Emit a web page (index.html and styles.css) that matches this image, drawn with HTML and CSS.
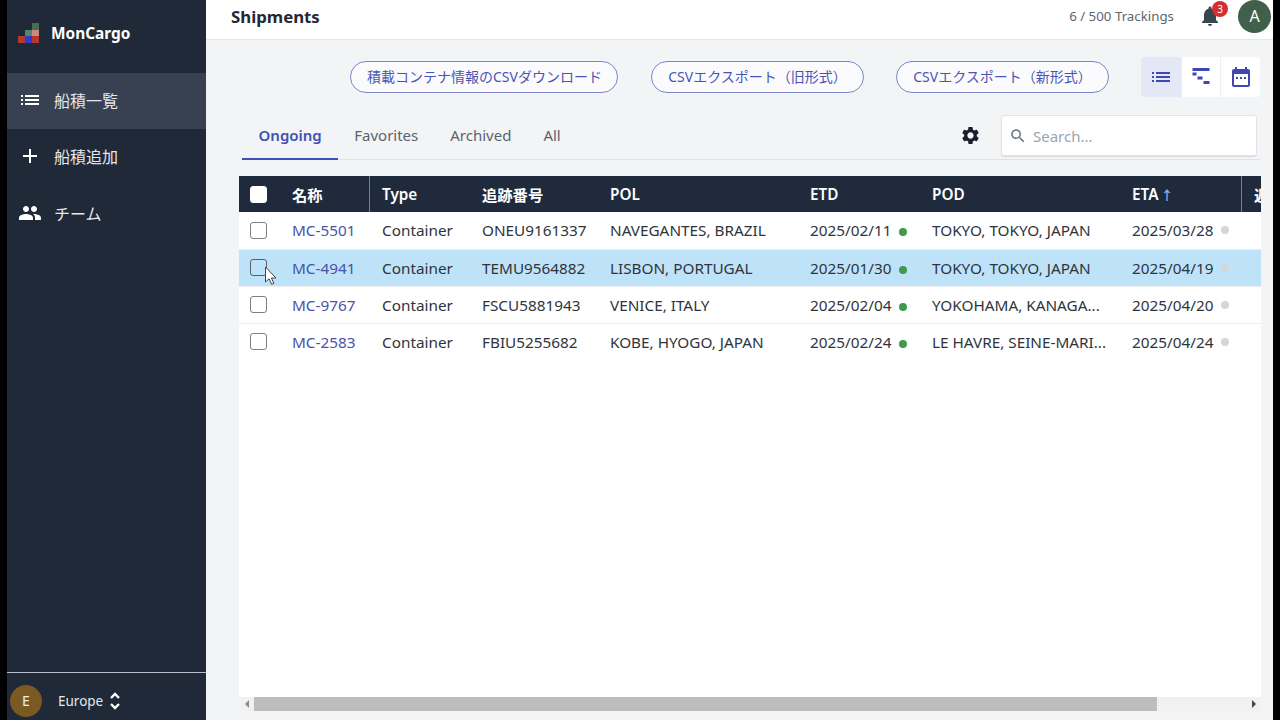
FILE: index.html
```html
<!DOCTYPE html>
<html lang="ja">
<head>
<meta charset="utf-8">
<title>MonCargo Shipments</title>
<link rel="stylesheet" href="styles.css">
</head>
<body>
<div class="frame">
  <aside class="sidebar">
    <div class="brand">
      <svg class="logo" width="22" height="22" viewBox="0 0 22 22">
        <rect x="15" y="1" width="7" height="7" fill="#4a6b4f"/>
        <rect x="8" y="8" width="7" height="6" fill="#4f8a68"/>
        <rect x="15" y="8" width="7" height="6" fill="#c98a80"/>
        <rect x="1" y="14" width="7" height="7" fill="#b03a30"/>
        <rect x="8" y="14" width="7" height="7" fill="#2f3ad0"/>
        <rect x="15" y="14" width="7" height="7" fill="#b8352f"/>
      </svg>
      <span class="brand-name">MonCargo</span>
    </div>
    <nav class="nav">
      <a class="nav-item active">
        <svg class="nav-icon" viewBox="0 0 24 24"><path d="M3 13h2v-2H3v2zm0 4h2v-2H3v2zm0-8h2V7H3v2zm4 4h14v-2H7v2zm0 4h14v-2H7v2zM7 7v2h14V7H7z"/></svg>
        <span>船積一覧</span>
      </a>
      <a class="nav-item">
        <svg class="nav-icon" viewBox="0 0 24 24"><path d="M19 13h-6v6h-2v-6H5v-2h6V5h2v6h6v2z"/></svg>
        <span>船積追加</span>
      </a>
      <a class="nav-item">
        <svg class="nav-icon" viewBox="0 0 24 24"><path d="M16 11c1.660 0 2.990-1.340 2.990-3S17.660 5 16 5s-3 1.340-3 3 1.340 3 3 3zm-8 0c1.660 0 2.990-1.340 2.990-3S9.660 5 8 5 5 6.340 5 8s1.340 3 3 3zm0 2c-2.330 0-7 1.170-7 3.500V19h14v-2.500c0-2.330-4.670-3.500-7-3.500zm8 0c-.29 0-.62.020-.97.050 1.160.84 1.970 1.970 1.970 3.450V19h6v-2.500c0-2.330-4.670-3.500-7-3.500z"/></svg>
        <span>チーム</span>
      </a>
    </nav>
    <div class="region">
      <span class="region-avatar">E</span>
      <span class="region-name">Europe</span>
      <svg class="region-arrows" width="12" height="20" viewBox="0 0 12 20"><path d="M2 7l4-4 4 4M2 13l4 4 4-4" fill="none" stroke="#fff" stroke-width="2.400"/></svg>
    </div>
  </aside>
  <div class="main">
    <header class="topbar">
      <h1 class="title">Shipments</h1>
      <div class="top-right">
        <span class="trackings">6 / 500 Trackings</span>
        <span class="bell">
          <svg width="24" height="24" viewBox="0 0 24 24"><path fill="#37474f" d="M12 22c1.100 0 2-.9 2-2h-4c0 1.100.9 2 2 2zm6-6v-5c0-3.070-1.630-5.640-4.500-6.320V4c0-.83-.67-1.500-1.500-1.500s-1.500.67-1.500 1.500v.68C7.640 5.360 6 7.920 6 11v5l-2 2v1h16v-1l-2-2z"/></svg>
          <span class="badge">3</span>
        </span>
        <span class="avatar">A</span>
      </div>
    </header>
    <section class="actions">
      <button class="pill">積載コンテナ情報のCSVダウンロード</button>
      <button class="pill">CSVエクスポート（旧形式）</button>
      <button class="pill">CSVエクスポート（新形式）</button>
      <div class="views">
        <span class="view selected"><svg width="24" height="24" viewBox="0 0 24 24"><path d="M3 13h2v-2H3v2zm0 4h2v-2H3v2zm0-8h2V7H3v2zm4 4h14v-2H7v2zm0 4h14v-2H7v2zM7 7v2h14V7H7z"/></svg></span>
        <span class="view"><svg width="24" height="24" viewBox="0 0 24 24"><path d="M3.500 3h17v3h-17zM3.500 7.500h4v3h-4zM8.500 11.500h5v3h-5zM14.500 16h6v3h-6z"/></svg></span>
        <span class="view"><svg width="24" height="24" viewBox="0 0 24 24"><path d="M19 4h-1V2h-2v2H8V2H6v2H5c-1.100 0-2 .9-2 2v14c0 1.100.9 2 2 2h14c1.100 0 2-.9 2-2V6c0-1.100-.9-2-2-2zm0 16H5V9h14v11zM7 12h2v2H7zm4 0h2v2h-2zm4 0h2v2h-2z"/></svg></span>
      </div>
    </section>
    <section class="tabbar">
      <div class="tabs">
        <a class="tab current">Ongoing</a>
        <a class="tab">Favorites</a>
        <a class="tab">Archived</a>
        <a class="tab">All</a>
      </div>
      <div class="tools">
        <svg class="gear" width="21" height="21" viewBox="0 0 24 24"><path fill="#1a1f2b" d="M19.140 12.940c.04-.3.060-.61.060-.94 0-.32-.02-.64-.07-.94l2.030-1.580c.18-.14.230-.41.120-.61l-1.920-3.320c-.12-.22-.37-.29-.59-.22l-2.390.96c-.5-.38-1.030-.7-1.620-.94l-.36-2.540c-.04-.24-.24-.41-.48-.41h-3.840c-.24 0-.43.170-.47.410l-.36 2.540c-.59.240-1.130.570-1.620.940l-2.390-.96c-.22-.08-.47 0-.59.220L2.740 8.870c-.12.210-.08.470.12.610l2.030 1.580c-.05.3-.09.630-.09.940s.02.640.07.940l-2.030 1.580c-.18.140-.23.410-.12.610l1.920 3.320c.12.220.37.290.59.220l2.390-.96c.5.380 1.030.7 1.620.94l.36 2.540c.05.240.24.410.48.410h3.840c.24 0 .44-.17.470-.41l.36-2.540c.59-.24 1.130-.56 1.620-.94l2.390.96c.22.080.47 0 .59-.22l1.920-3.320c.12-.22.070-.47-.12-.61l-2.010-1.580zM12 15.600c-1.980 0-3.600-1.620-3.600-3.600s1.620-3.600 3.600-3.600 3.600 1.620 3.600 3.600-1.620 3.600-3.600 3.600z"/></svg>
        <label class="search">
          <svg width="18" height="18" viewBox="0 0 24 24"><path fill="#6b7280" d="M15.500 14h-.79l-.28-.27C15.410 12.590 16 11.110 16 9.500 16 5.910 13.090 3 9.500 3S3 5.910 3 9.500 5.910 16 9.500 16c1.610 0 3.090-.59 4.230-1.570l.27.28v.79l5 4.990L20.490 19l-4.990-5zm-6 0C7.010 14 5 11.990 5 9.500S7.010 5 9.500 5 14 7.010 14 9.500 11.990 14 9.500 14z"/></svg>
          <span class="placeholder">Search...</span>
        </label>
      </div>
    </section>
    <section class="table-card">
      <div class="table-clip">
        <table class="grid">
          <colgroup>
            <col class="c-check"><col class="c-name"><col class="c-type"><col class="c-track"><col class="c-pol"><col class="c-etd"><col class="c-pod"><col class="c-eta"><col class="c-next">
          </colgroup>
          <thead>
            <tr>
              <th><span class="box head-box"></span></th>
              <th class="divided">名称</th>
              <th>Type</th>
              <th>追跡番号</th>
              <th>POL</th>
              <th>ETD</th>
              <th>POD</th>
              <th class="divided">ETA <span class="sort">↑</span></th>
              <th class="last-head">遅延</th>
            </tr>
          </thead>
          <tbody>
            <tr>
              <td><span class="box"></span></td><td><a class="link">MC-5501</a></td><td>Container</td><td>ONEU9161337</td><td>NAVEGANTES, BRAZIL</td>
              <td>2025/02/11<i class="dot green"></i></td><td>TOKYO, TOKYO, JAPAN</td><td>2025/03/28<i class="dot grey"></i></td><td></td>
            </tr>
            <tr class="hover">
              <td><span class="box"></span></td><td><a class="link">MC-4941</a></td><td>Container</td><td>TEMU9564882</td><td>LISBON, PORTUGAL</td>
              <td>2025/01/30<i class="dot green"></i></td><td>TOKYO, TOKYO, JAPAN</td><td>2025/04/19<i class="dot grey"></i></td><td></td>
            </tr>
            <tr>
              <td><span class="box"></span></td><td><a class="link">MC-9767</a></td><td>Container</td><td>FSCU5881943</td><td>VENICE, ITALY</td>
              <td>2025/02/04<i class="dot green"></i></td><td>YOKOHAMA, KANAGA...</td><td>2025/04/20<i class="dot grey"></i></td><td></td>
            </tr>
            <tr>
              <td><span class="box"></span></td><td><a class="link">MC-2583</a></td><td>Container</td><td>FBIU5255682</td><td>KOBE, HYOGO, JAPAN</td>
              <td>2025/02/24<i class="dot green"></i></td><td>LE HAVRE, SEINE-MARI...</td><td>2025/04/24<i class="dot grey"></i></td><td></td>
            </tr>
          </tbody>
        </table>
        <svg class="cursor" width="14" height="20" viewBox="0 0 14 20"><path d="M1.500 1v15l3.600-3.200 2.500 5.600 2.300-1-2.500-5.400h4.600z" fill="#fff" stroke="#444" stroke-width="1"/></svg>
      </div>
      <div class="scrollbar">
        <span class="arrow left"></span>
        <span class="track"><span class="thumb"></span></span>
        <span class="arrow right"></span>
      </div>
    </section>
  </div>
</div>
</body>
</html>
```

FILE: styles.css
```css
* { box-sizing: border-box; }
html, body { margin: 0; height: 100%; }
body {
  background: #000;
  font-family: "Noto Sans", "Noto Sans CJK JP", sans-serif;
  color: #2b2f38;
  overflow: hidden;
}
.frame { display: flex; width: 1280px; height: 720px; padding: 0 7px; }

.sidebar {
  width: 199px; flex: none;
  background: #1f2937;
  display: flex; flex-direction: column;
  color: #fff;
}
.brand { height: 73px; display: flex; align-items: center; padding: 0 0 7px 10px; gap: 12px; flex: none; }
.logo { flex: none; }
.brand-name { font-size: 15.400px; font-weight: 700; }
.nav { flex: 1; display: flex; flex-direction: column; }
.nav-item { height: 56px; margin-bottom: .5px; display: flex; align-items: center; padding: 0 0 3px 11px; gap: 12px; color: #e5e7eb; font-size: 16px; }
.nav-item.active { background: #374151; }
.nav-icon { width: 24px; height: 24px; fill: #fff; flex: none; }
.region { height: 48px; border-top: 1px solid #b8bcc4; display: flex; align-items: center; padding: 8px 0 0 3px; flex: none; }
.region-avatar { width: 32px; height: 32px; border-radius: 50%; background: #7a5a22; display: flex; align-items: center; justify-content: center; font-size: 14px; color: #eee; }
.region-name { font-size: 13.500px; margin-left: 16px; color: #e5e7eb; }
.region-arrows { margin-left: 6px; }

.main { flex: 1; min-width: 0; background: #f3f4f6; display: flex; flex-direction: column; }
.topbar {
  height: 40px; flex: none; background: #fff;
  border-bottom: 1px solid #e5e7eb;
  display: flex; align-items: center; justify-content: space-between;
  padding: 0 2px 7px 25px;
}
.title { margin: 0; font-size: 16.800px; font-weight: 700; color: #1f2937; }
.top-right { display: flex; align-items: center; }
.trackings { font-size: 13.300px; color: #5f6670; }
.bell { position: relative; width: 24px; height: 24px; margin-left: 24px; display: block; }
.badge { position: absolute; left: 14px; top: -3px; width: 16px; height: 16px; border-radius: 50%; background: #d32f2f; color: #fff; font-size: 10px; line-height: 16px; text-align: center; }
.avatar { width: 33px; height: 33px; margin-left: 16px; border-radius: 50%; background: #41604c; color: #fff; font-size: 16px; display: flex; align-items: center; justify-content: center; }

.actions { height: 72px; flex: none; display: flex; align-items: center; padding: 2px 13px 0 144px; }
.pill {
  height: 32px; border-radius: 16px; border: 1px solid #7c87c9; background: #fbfbfe;
  color: #4a55b3; font: 14px "Noto Sans", "Noto Sans CJK JP", sans-serif; padding: 0 16px 2px; white-space: nowrap;
}
.pill:nth-child(1) { width: 268px; }
.pill:nth-child(2) { width: 213px; margin-left: 33px; }
.pill:nth-child(3) { width: 213px; margin-left: 32px; }
.views { margin-left: 32px; display: flex; background: #fff; border-radius: 4px; overflow: hidden; height: 40px; }
.view { width: 40px; display: flex; align-items: center; justify-content: center; border-left: 1px solid #eceef2; }
.view:first-child { border-left: 0; }
.view:nth-child(2) { width: 39px; }
.view svg { fill: #3f47b5; }
.view.selected { background: #e3e7f6; }

.tabbar { height: 48px; flex: none; margin: 0 13px 0 36px; display: flex; justify-content: space-between; border-bottom: 1px solid #dfe1e6; }
.tabs { display: flex; }
.tab { height: 48px; padding: 0 16px 2px; display: flex; align-items: center; font-size: 15px; color: #5b6270; }
.tab.current { color: #3f51b5; font-weight: 600; border-bottom: 2px solid #3f51b5; padding: 0 16.500px; }
.tools { display: flex; align-items: center; padding-right: 3px; }
.gear { margin-right: 20px; }
.search { width: 256px; height: 41px; background: #fff; border: 1px solid #e2e4e9; border-radius: 3px; display: flex; align-items: center; padding-left: 7px; gap: 6px; box-shadow: 0 1px 1px #d8dade; }
.placeholder { font-size: 15px; color: #9ca3af; }

.table-card { flex: 1; min-height: 0; margin: 16px 12px 9px 33px; background: #fff; display: flex; flex-direction: column; }
.table-clip { flex: 1; min-height: 0; position: relative; overflow: hidden; }
.grid { border-collapse: collapse; table-layout: fixed; width: 1092px; font-size: 15.300px; }
.c-check { width: 41px; } .c-name { width: 90px; } .c-type { width: 100px; } .c-track { width: 128px; }
.c-pol { width: 200px; } .c-etd { width: 122px; } .c-pod { width: 200px; } .c-eta { width: 122px; } .c-next { width: 89px; }
.grid th { height: 36px; background: #1f2a3c; color: #fff; font-size: 15.300px; font-weight: 600; text-align: left; padding: 0 0 1px 12px; white-space: nowrap; overflow: hidden; }
.grid th:first-child { padding: 0 0 0 11px; }
.grid td:first-child { padding-left: 11px; }
.grid th.divided { box-shadow: inset -1px 0 #7b818c; }
.grid th.last-head { padding-left: 12px; }
.sort { color: #90a4e6; font-size: 13px; font-weight: 700; margin-left: -2px; }
.grid td { height: 37px; padding: 0 0 0 12px; border-bottom: 1px solid #eceef0; color: #2f343c; white-space: nowrap; overflow: hidden; }
.grid tbody tr:last-child td { border-bottom: 0; }
.grid tr.hover td { background: #bee3f8; }
.link { color: #4a52a8; }
.box { display: block; width: 17px; height: 17px; border: 1.500px solid #7f7f7f; border-radius: 3px; }
.hover .box { border-color: #5c5f66; }
.head-box { background: #fff; border-color: #fff; }
.dot { display: inline-block; width: 8px; height: 8px; border-radius: 50%; margin-left: 8px; }
.green { background: #3d9a50; }
.grey { background: #d4d6da; vertical-align: 2px; }
.cursor { position: absolute; left: 25px; top: 90px; }

.scrollbar { height: 14px; flex: none; background: #f1f1f1; display: flex; align-items: center; }
.arrow { width: 15px; flex: none; display: flex; justify-content: center; }
.arrow::before { content: ""; border: 4px solid transparent; }
.arrow.left::before { border-right-color: #8a8a8a; border-left-width: 0; }
.arrow.right::before { border-left-color: #444; border-right-width: 0; }
.track { flex: 1; height: 14px; }
.thumb { display: block; width: 903px; height: 14px; background: #bdbdbd; }
```
